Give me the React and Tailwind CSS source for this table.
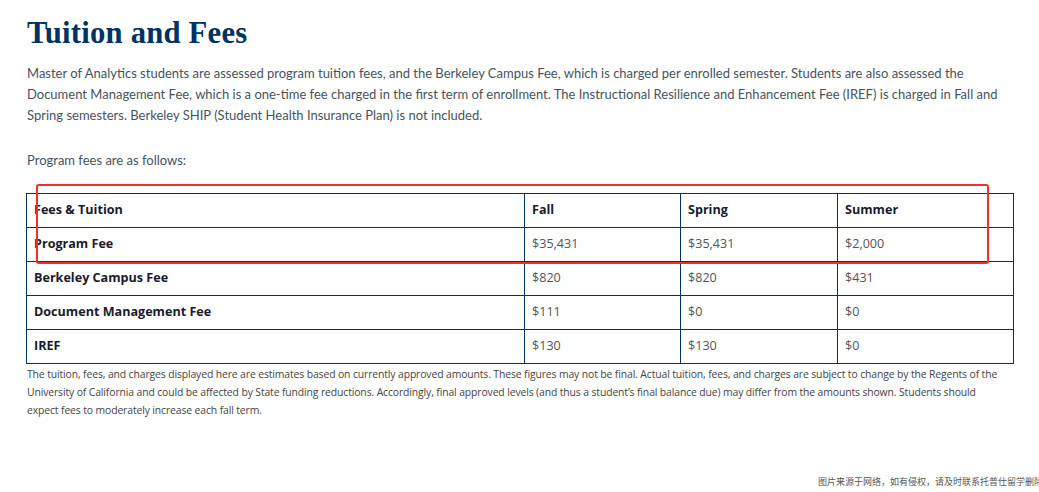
const ROWS = [
  { name: 'Program Fee', fall: '$35,431', spring: '$35,431', summer: '$2,000' },
  { name: 'Berkeley Campus Fee', fall: '$820', spring: '$820', summer: '$431' },
  { name: 'Document Management Fee', fall: '$111', spring: '$0', summer: '$0' },
  { name: 'IREF', fall: '$130', spring: '$130', summer: '$0' },
]

const cell = 'border border-[#003262] h-[34px] px-[7px] align-middle'

export default function App() {
  return (
    <div className="relative w-[1039px] h-[492px] overflow-hidden bg-white">
      <div className="pl-[27px] pt-[14px]">
        <h1 className="font-['Liberation_Serif',serif] font-bold text-[30.7px] leading-[38px] text-[#003262] tracking-[0.2px]">
          Tuition and Fees
        </h1>

        <p className="mt-[11px] whitespace-nowrap font-['Lato',sans-serif] text-[13px] leading-[21px] text-[#46535e]">
          Master of Analytics students are assessed program tuition fees, and the Berkeley Campus Fee, which is charged per enrolled semester. Students are also assessed the
          <br />
          Document Management Fee, which is a one-time fee charged in the first term of enrollment. The Instructional Resilience and Enhancement Fee (IREF) is charged in Fall and
          <br />
          Spring semesters. Berkeley SHIP (Student Health Insurance Plan) is not included.
        </p>

        <p className="mt-[24px] font-['Lato',sans-serif] text-[13px] leading-[21px] text-[#46535e]">
          Program fees are as follows:
        </p>
      </div>

      <table className="ml-[26px] mt-[22px] w-[988px] border-collapse font-['Open_Sans',sans-serif] text-[12.6px]">
        <colgroup>
          <col className="w-[498px]" />
          <col className="w-[156px]" />
          <col className="w-[157px]" />
          <col />
        </colgroup>
        <thead>
          <tr className="text-[#1a1a2e] font-bold">
            <td className={cell}>Fees &amp; Tuition</td>
            <td className={cell}>Fall</td>
            <td className={cell}>Spring</td>
            <td className={cell}>Summer</td>
          </tr>
        </thead>
        <tbody>
          {ROWS.map(r => (
            <tr key={r.name}>
              <td className={`${cell} font-bold text-[#1a1a2e]`}>{r.name}</td>
              <td className={`${cell} text-[#555]`}>{r.fall}</td>
              <td className={`${cell} text-[#555]`}>{r.spring}</td>
              <td className={`${cell} text-[#555]`}>{r.summer}</td>
            </tr>
          ))}
        </tbody>
      </table>

      <p className="pl-[27px] pt-[1px] whitespace-nowrap font-['Open_Sans',sans-serif] text-[10.4px] tracking-[-0.12px] leading-[18px] text-[#444]">
        The tuition, fees, and charges displayed here are estimates based on currently approved amounts. These figures may not be final. Actual tuition, fees, and charges are subject to change by the Regents of the
        <br />
        University of California and could be affected by State funding reductions. Accordingly, final approved levels (and thus a student’s final balance due) may differ from the amounts shown. Students should
        <br />
        expect fees to moderately increase each fall term.
      </p>

      {/* red annotation box */}
      <div className="absolute left-[36px] top-[184px] w-[953px] h-[80px] border-2 border-[#f0302a] rounded-[3px] pointer-events-none" />

      {/* watermark */}
      <div className="absolute left-[818px] top-[475px] whitespace-nowrap font-['Noto_Sans_CJK_SC',sans-serif] text-[9px] text-[#555]">
        图片来源于网络，如有侵权，请及时联系托普仕留学删除
      </div>
    </div>
  )
}
